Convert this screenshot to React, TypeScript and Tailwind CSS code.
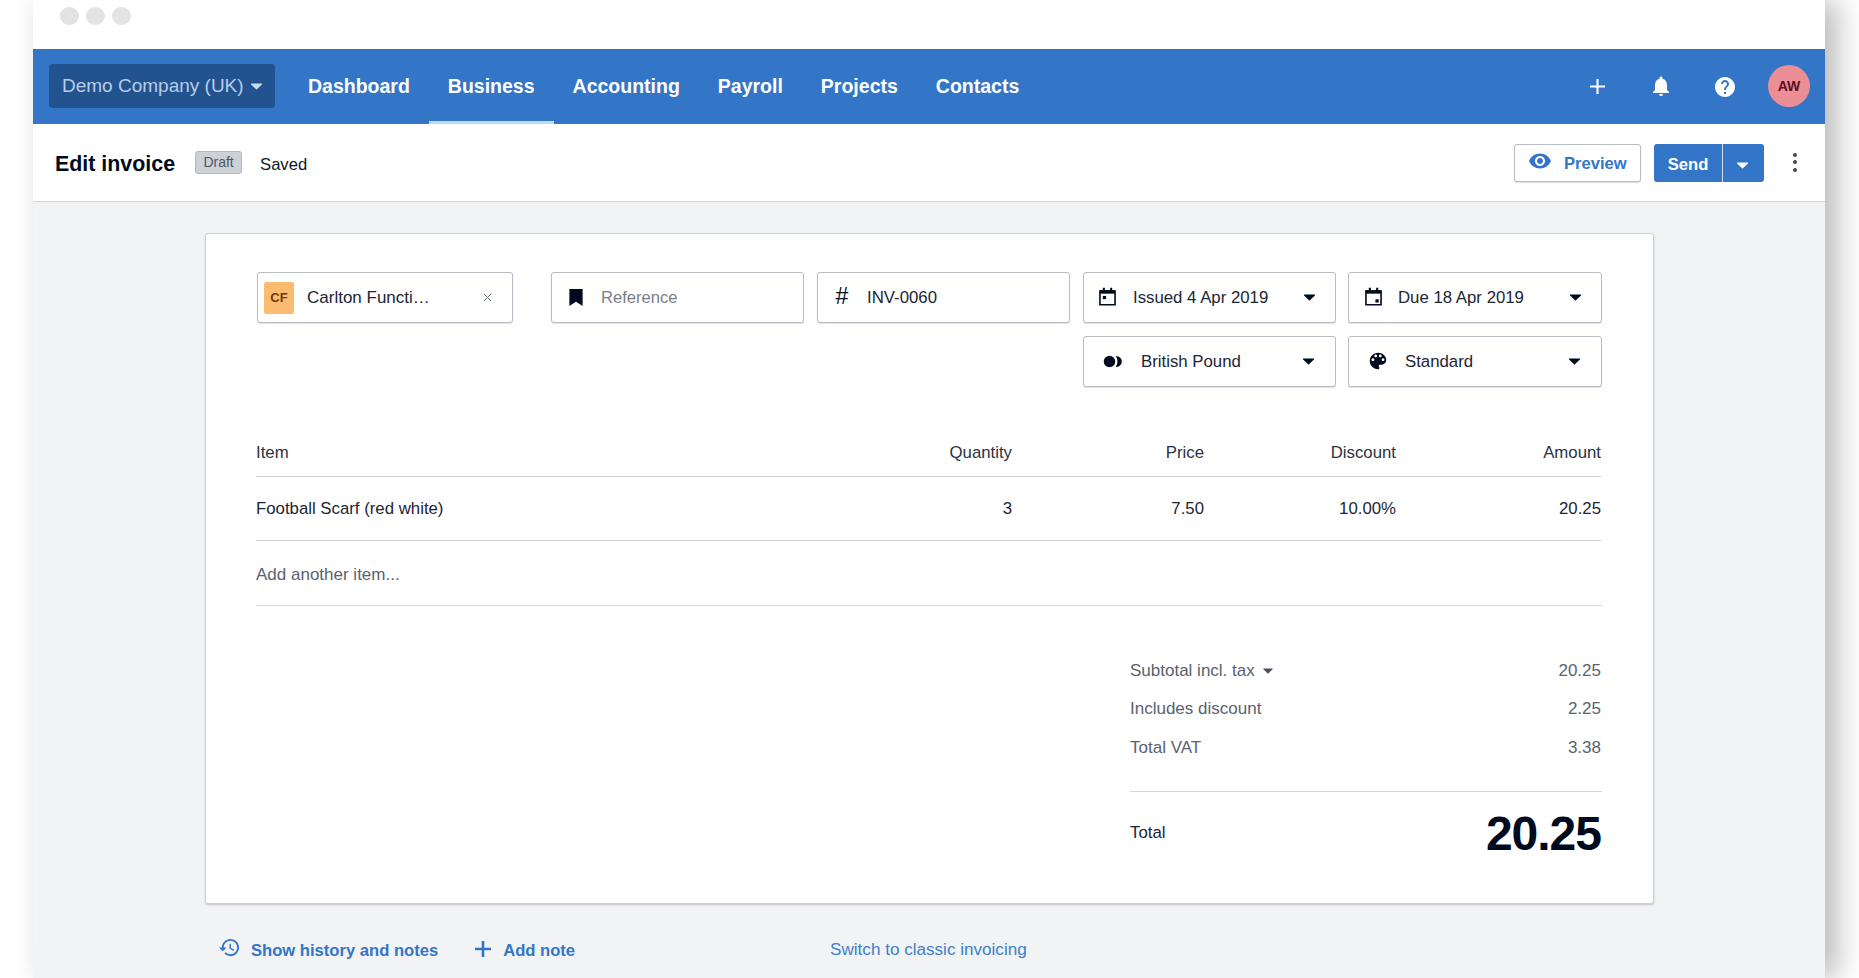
import React from "react";

const PATHS = {
  bell: "M12 22c1.1 0 2-.9 2-2h-4c0 1.1.9 2 2 2zm6-6v-5c0-3.07-1.63-5.64-4.5-6.32V4c0-.83-.67-1.5-1.5-1.5s-1.5.67-1.5 1.5v.68C7.64 5.36 6 7.92 6 11v5l-2 2v1h16v-1l-2-2z",
  help: "M12 2C6.48 2 2 6.48 2 12s4.48 10 10 10 10-4.48 10-10S17.52 2 12 2zm1 17h-2v-2h2v2zm2.07-7.75l-.9.92C13.45 12.9 13 13.5 13 15h-2v-.5c0-1.1.45-2.1 1.17-2.83l1.24-1.26c.37-.36.59-.86.59-1.41 0-1.1-.9-2-2-2s-2 .9-2 2H8c0-2.21 1.79-4 4-4s4 1.79 4 4c0 .88-.36 1.68-.93 2.25z",
  eye: "M12 4.5C7 4.5 2.73 7.61 1 12c1.73 4.39 6 7.5 11 7.5s9.27-3.11 11-7.5c-1.73-4.39-6-7.5-11-7.5zM12 17c-2.76 0-5-2.24-5-5s2.24-5 5-5 5 2.24 5 5-2.24 5-5 5zm0-8c-1.66 0-3 1.34-3 3s1.34 3 3 3 3-1.34 3-3-1.34-3-3-3z",
  palette: "M12 3c-4.97 0-9 4.03-9 9s4.03 9 9 9c.83 0 1.5-.67 1.5-1.5 0-.39-.15-.74-.39-1.01-.23-.26-.38-.61-.38-.99 0-.83.67-1.5 1.5-1.5H16c2.76 0 5-2.24 5-5 0-4.42-4.03-8-9-8zm-5.5 9c-.83 0-1.5-.67-1.5-1.5S5.67 9 6.5 9 8 9.67 8 10.5 7.33 12 6.5 12zm3-4C8.67 8 8 7.33 8 6.5S8.67 5 9.5 5s1.5.67 1.5 1.5S10.33 8 9.5 8zm5 0c-.83 0-1.5-.67-1.5-1.5S13.67 5 14.5 5s1.5.67 1.5 1.5S15.33 8 14.5 8zm3 4c-.83 0-1.5-.67-1.5-1.5S16.67 9 17.5 9s1.5.67 1.5 1.5-.67 1.5-1.5 1.5z",
  history: "M13 3c-4.97 0-9 4.03-9 9H1l3.89 3.89.07.14L9 12H6c0-3.87 3.13-7 7-7s7 3.13 7 7-3.13 7-7 7c-1.93 0-3.68-.79-4.94-2.06l-1.42 1.42C8.27 19.99 10.51 21 13 21c4.97 0 9-4.03 9-9s-4.03-9-9-9zm-1 5v5l4.28 2.54.72-1.21-3.5-2.08V8H12z",
};

function Icon({ d, className }: { d: string; className?: string }) {
  return (
    <svg viewBox="0 0 24 24" className={className} fill="currentColor" aria-hidden="true">
      <path d={d} />
    </svg>
  );
}

function Caret({ className }: { className?: string }) {
  return (
    <svg viewBox="0 0 14 8" className={className} fill="currentColor" aria-hidden="true">
      <path d="M1.2 0.6h11.6c.5 0 .8.6.4 1L7.5 7.2c-.3.3-.7.3-1 0L.8 1.6c-.4-.4-.1-1 .4-1z" />
    </svg>
  );
}

function Calendar({ due }: { due?: boolean }) {
  return (
    <svg viewBox="0 0 18 20" className="w-[17px] h-[19px] -mt-[2px] shrink-0 text-[#000a1e]" aria-hidden="true">
      <path d="M1 4.2h16v14.6H1z" fill="none" stroke="currentColor" strokeWidth="1.7" />
      <path d="M1 3.4h16V7H1z" fill="currentColor" />
      <path d="M4 .8h2.2v4H4zM11.8.8H14v4h-2.2z" fill="currentColor" />
      {due ? <path d="M11 13h3.5v3.4H11z" fill="currentColor" /> : <path d="M4 9.4h3.5v3.4H4z" fill="currentColor" />}
    </svg>
  );
}

function Plus({ className, weight }: { className?: string; weight: number }) {
  return (
    <svg viewBox="0 0 18 18" className={className} aria-hidden="true">
      <path d="M9 1v16M1 9h16" stroke="currentColor" strokeWidth={weight} fill="none" />
    </svg>
  );
}

const field = "h-[51px] shrink-0 bg-white border border-[#b9bcc2] rounded-[3px] shadow-[0_1px_1px_rgba(0,10,30,0.12)] flex items-center text-[16.8px] text-[#1c2534]";

function SelectField({ icon, label, pl, gap, right }: { icon: React.ReactNode; label: string; pl: string; gap: string; right: string }) {
  return (
    <div className={`${field} ${pl} ${right}`}>
      {icon}
      <span className={`${gap} flex-1 pt-[1px]`}>{label}</span>
      <Caret className="w-[13px] h-[7px] -mt-[1px] text-[#000a1e]" />
    </div>
  );
}

function Summary({ label, value, caret }: { label: string; value: string; caret?: boolean }) {
  return (
    <div className="h-[38.5px] pr-[1px] flex items-center justify-between text-[17px] text-[#5a626e]">
      <span className="flex items-center">
        {label}
        {caret && <Caret className="w-[12px] h-[6px] ml-[7px] mt-[2px] text-[#4a525e]" />}
      </span>
      <span>{value}</span>
    </div>
  );
}

function Items() {
  return (
    <div className="-ml-[1px] text-[16.8px] text-[#1c2534]">
      <div className="h-[48px] pr-[1px] border-b border-[#d4d6da] grid grid-cols-[1fr_200px_192px_192px_205px] items-center text-[#2b3340]">
        <span>Item</span>
        <span className="text-right">Quantity</span>
        <span className="text-right">Price</span>
        <span className="text-right">Discount</span>
        <span className="text-right">Amount</span>
      </div>
      <div className="h-[64px] pt-[1px] pr-[1px] border-b border-[#d4d6da] grid grid-cols-[1fr_200px_192px_192px_205px] items-center">
        <span>Football Scarf (red white)</span>
        <span className="text-right">3</span>
        <span className="text-right">7.50</span>
        <span className="text-right">10.00%</span>
        <span className="text-right">20.25</span>
      </div>
      <div className="h-[65px] pt-[3px] border-b border-[#d4d6da] flex items-center text-[17px] text-[#5a626e]">Add another item...</div>
      <div className="ml-[874px] mt-[45px]">
        <Summary label="Subtotal incl. tax" value="20.25" caret />
        <Summary label="Includes discount" value="2.25" />
        <Summary label="Total VAT" value="3.38" />
        <div className="mt-[24px] border-t border-[#d4d6da] h-[80px] pr-[1px] flex items-center justify-between">
          <span className="text-[#1c2534] mt-[4px]">Total</span>
          <span className="text-[48px] font-bold tracking-[-1px] text-[#000a1e] leading-none mt-[5px]">20.25</span>
        </div>
      </div>
    </div>
  );
}

export default function App() {
  const nav = ["Dashboard", "Business", "Accounting", "Payroll", "Projects", "Contacts"];
  return (
    <div className="w-[1859px] h-[978px] overflow-hidden bg-white font-['Liberation_Sans',Arial,sans-serif]">
      <div className="ml-[33px] w-[1792px] h-[978px] flex flex-col bg-white shadow-[12px_0_28px_rgba(0,0,0,0.28)]">
        {/* window dots */}
        <div className="h-[49px] shrink-0 pl-[27px] pt-[7px] flex gap-[7px]">
          <span className="w-[19px] h-[18px] rounded-full bg-[#e2e3e5]" />
          <span className="w-[19px] h-[18px] rounded-full bg-[#e2e3e5]" />
          <span className="w-[19px] h-[18px] rounded-full bg-[#e2e3e5]" />
        </div>

        {/* top nav */}
        <header className="h-[75px] shrink-0 bg-[#3376c8] flex items-center pl-[16px] pr-[15px] text-white">
          <div className="w-[226px] h-[44px] -mt-[1px] rounded-[4px] bg-[#23538f] flex items-center pl-[13px] text-[19px] text-[#b6cde8]">
            Demo Company (UK)
            <Caret className="w-[13px] h-[7px] ml-[6px] text-[#c9dbef]" />
          </div>
          <nav className="ml-[14px] flex h-full">
            {nav.map((n) => (
              <div key={n} className="relative flex items-center px-[19px] text-[19.5px] font-bold">
                {n}
                {n === "Business" && <span className="absolute left-0 right-0 bottom-0 h-[3px] bg-[#bcdcf5]" />}
              </div>
            ))}
          </nav>
          <div className="ml-auto flex items-center">
            <Plus weight={2.2} className="w-[17px] h-[17px] mr-[43px]" />
            <Icon d={PATHS.bell} className="w-[24px] h-[24px] -mt-[2px] mr-[40px]" />
            <Icon d={PATHS.help} className="w-[24px] h-[24px] mr-[31px]" />
            <div className="w-[42px] h-[42px] -mt-[1px] rounded-full bg-[#ec8e95] flex items-center justify-center text-[14px] font-bold text-[#5c0f1f]">AW</div>
          </div>
        </header>

        {/* title bar */}
        <div className="h-[78px] shrink-0 border-b border-[#d2d4d8] flex items-center pl-[22px] pr-[27px]">
          <h1 className="text-[21.4px] font-bold text-[#000a1e] mt-[3px]">Edit invoice</h1>
          <span className="ml-[20px] w-[47px] h-[23px] -mt-[1px] rounded-[3px] bg-[#ccd0d7] border border-[#b4b8c0] flex items-center justify-center text-[14px] text-[#4f5763]">Draft</span>
          <span className="ml-[18px] mt-[6px] text-[16.6px] text-[#0d1626]">Saved</span>
          <div className="ml-auto flex items-center">
            <button className="w-[127px] h-[38px] bg-white border border-[#b9bcc2] rounded-[3px] shadow-[0_1px_1px_rgba(0,10,30,0.15)] flex items-center pl-[13px] text-[16.6px] font-bold text-[#3376c8]">
              <Icon d={PATHS.eye} className="w-[24px] h-[24px] -mt-[3px] mr-[12px]" />
              <span className="mt-[4px]">Preview</span>
            </button>
            <div className="ml-[13px] w-[110px] h-[38px] rounded-[3px] bg-[#3376c8] flex items-center text-white">
              <span className="w-[69px] h-full pt-[5px] flex items-center justify-center text-[16.6px] font-bold border-r border-[#cfe0f3]">Send</span>
              <Caret className="w-[13px] h-[7px] ml-[13px] mt-[5px]" />
            </div>
            <div className="ml-[29px] w-[5px] flex flex-col gap-[3.5px] -mt-[1px]">
              <span className="w-[4px] h-[4px] rounded-full bg-[#3f4753]" />
              <span className="w-[4px] h-[4px] rounded-full bg-[#3f4753]" />
              <span className="w-[4px] h-[4px] rounded-full bg-[#3f4753]" />
            </div>
          </div>
        </div>

        {/* main */}
        <main className="flex-1 bg-[#f2f3f5] pt-[31px]">
          <section className="ml-[172px] w-[1449px] h-[671px] bg-white border border-[#cdd0d5] rounded-[3px] shadow-[0_1px_2px_rgba(0,10,30,0.2)] pt-[38px] pl-[51px] pr-[51px]">
            <div className="flex">
              <div className={`${field} w-[256px] pl-[6px] pr-[20px]`}>
                <span className="w-[30px] h-[32px] rounded-[2px] bg-[#fbbc6f] flex items-center justify-center text-[13px] font-bold text-[#6e3d05]">CF</span>
                <span className="ml-[13px] flex-1 pt-[1px] text-[17px]">Carlton Functi…</span>
                <svg viewBox="0 0 10 10" className="w-[9px] h-[9px] text-[#6b7280]" aria-hidden="true"><path d="M1 1l8 8M9 1l-8 8" stroke="currentColor" strokeWidth="1.1" /></svg>
              </div>
              <div className={`${field} ml-[38px] w-[253px] pl-[17px]`}>
                <svg viewBox="0 0 14 18" className="w-[14px] h-[17px] -mt-[1px] text-[#000a1e]" aria-hidden="true"><path d="M0 0h14v18l-7-4.6L0 18z" fill="currentColor" /></svg>
                <span className="ml-[18px] pt-[1px] text-[16.6px] text-[#7a8089]">Reference</span>
              </div>
              <div className={`${field} ml-[13px] w-[253px] pl-[14px]`}>
                <span className="w-[20px] text-center text-[23px] leading-none -mt-[2px] text-[#000a1e]">#</span>
                <span className="ml-[15px] pt-[1px]">INV-0060</span>
              </div>
              <div className="ml-[13px] w-[519px] shrink-0 grid grid-cols-[253px_254px] gap-x-[12px] gap-y-[13px]">
                <SelectField pl="pl-[15px]" right="pr-[19px]" gap="ml-[17px]" icon={<Calendar />} label="Issued 4 Apr 2019" />
                <SelectField pl="pl-[16px]" right="pr-[19px]" gap="ml-[16px]" icon={<Calendar due />} label="Due 18 Apr 2019" />
                <SelectField
                  pl="pl-[19px]"
                  right="pr-[20px]"
                  gap="ml-[18px]"
                  icon={
                    <svg viewBox="0 0 20 14" className="w-[20px] h-[13px] -mt-[1px] text-[#000a1e]" aria-hidden="true">
                      <circle cx="6.2" cy="7" r="6.2" fill="currentColor" />
                      <path d="M13 1A6.5 6 0 0 1 13 13Q16.5 7 13 1z" fill="currentColor" />
                    </svg>
                  }
                  label="British Pound"
                />
                <SelectField
                  pl="pl-[18px]"
                  right="pr-[20px]"
                  gap="ml-[16px]"
                  icon={<Icon d={PATHS.palette} className="w-[22px] h-[22px] -mt-[1px] text-[#000a1e]" />}
                  label="Standard"
                />
              </div>
            </div>
            <div className="mt-[42px]">
              <Items />
            </div>
          </section>
          <footer className="ml-[172px] w-[1449px] h-[40px] mt-[26px] flex items-center text-[16.6px] text-[#3376c8]">
            <Icon d={PATHS.history} className="w-[23px] h-[23px] ml-[13px] -mt-[6px]" />
            <span className="ml-[10px] mt-[2px] font-bold">Show history and notes</span>
            <Plus weight={2.6} className="w-[18px] h-[18px] ml-[36px] -mt-[3px]" />
            <span className="ml-[11px] mt-[2px] font-bold">Add note</span>
            <span className="ml-[255px] text-[17.1px] text-[#3d80c9]">Switch to classic invoicing</span>
          </footer>
        </main>
      </div>
    </div>
  );
}
